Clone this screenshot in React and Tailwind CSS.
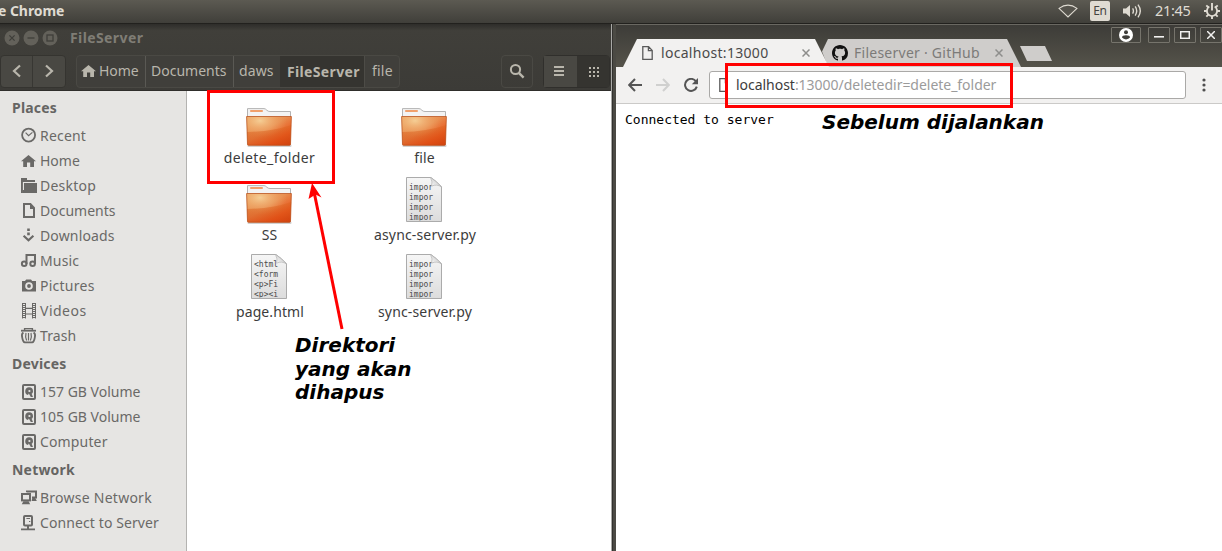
import React from "react";

const UI = "font-['Noto_Sans','Open_Sans',sans-serif]";

const glyphs = {
  recent: (
    <g fill="none" stroke="currentColor">
      <circle cx="7.6" cy="7.1" r="6.5" strokeWidth="1.8" />
      <path d="M4.6 4.6 L7.6 7.6 L11.4 4.4" strokeWidth="1.2" />
    </g>
  ),
  home: <path fill="currentColor" d="M7.5 2 L15 8.2 H13 V14 H9.2 V9.6 H6 V14 H2.2 V8.2 H0 Z" />,
  desktop: (
    <g fill="currentColor">
      <path d="M0 0 H6 V2 H14 V4 H1.9 V15 H0 Z" />
      <path d="M3 5 H16 V15 H3 Z" />
      <path d="M1.5 12 V15 H4 V12 Z" />
    </g>
  ),
  documents: (
    <g>
      <path fill="none" stroke="currentColor" strokeWidth="2" d="M3 1 H9.4 L13 4.8 V14 H3 Z" />
      <path fill="currentColor" d="M9 1 V6 H13.5 Z" />
    </g>
  ),
  downloads: (
    <g>
      <path fill="currentColor" d="M6.2 .6 H8.8 V3 H6.2 Z M6.2 4.4 H8.8 V7.2 H6.2 Z" />
      <path fill="none" stroke="currentColor" strokeWidth="2.2" d="M2.6 7.8 L7.5 12.2 L12.4 7.8" />
    </g>
  ),
  music: (
    <g fill="none" stroke="currentColor" strokeWidth="2">
      <circle cx="3.2" cy="10.8" r="2.3" />
      <circle cx="11.6" cy="10.8" r="2.3" />
      <path d="M5.5 11 V2 H14 V11" />
    </g>
  ),
  pictures: (
    <path
      fill="currentColor"
      fillRule="evenodd"
      d="M1 3 H4 L5.2 1.4 H10 L11.2 3 H15 V13.4 H1 Z M8 4.2 A3.8 3.8 0 1 0 8 11.8 A3.8 3.8 0 1 0 8 4.2 Z M8 6.1 A1.9 1.9 0 1 1 8 9.9 A1.9 1.9 0 1 1 8 6.1 Z"
    />
  ),
  videos: (
    <g fill="none" stroke="currentColor">
      <path strokeWidth="1" d="M1.5 0 V15.5 M4.5 0 V15.5 M11.5 0 V15.5 M14.5 0 V15.5" />
      <path strokeWidth="3" strokeDasharray="1 1" d="M3 0 V16 M13 0 V16" />
      <path strokeWidth="1.2" d="M4.5 5.4 H11.5 M4.5 11 H11.5" />
    </g>
  ),
  trash: (
    <g fill="none" stroke="currentColor">
      <path strokeWidth="1.8" d="M0 2.7 H15" />
      <path strokeWidth="1.4" d="M3.6 2.2 V.6 H11.4 V2.2" />
      <path strokeWidth="1.8" d="M2.4 4.6 Q.2 6 1.2 9.5 Q2 14.2 3.8 14.4 H11.2 Q13 14.2 13.8 9.5 Q14.8 6 12.6 4.6" />
      <path strokeWidth="1.2" d="M5 5 Q4 9 5.6 12.6 M7.5 5 V12.6 M10 5 Q11 9 9.4 12.6" />
    </g>
  ),
  disk: (
    <g>
      <rect x="2" y="1" width="12" height="14" rx="1" fill="none" stroke="currentColor" strokeWidth="2" />
      <path fill="currentColor" d="M8 3.2 A4 4 0 0 1 12 7.2 C12 8.6 11.4 9.2 10.6 9.8 L12 13 H9.8 L7.8 9.4 L7 11 A4 4 0 0 1 8 3.2 Z" />
      <circle cx="8.4" cy="7" r="1.1" fill="#e6e5e3" />
    </g>
  ),
  network: (
    <g>
      <rect x="1" y="4" width="8" height="6.4" fill="none" stroke="currentColor" strokeWidth="2" />
      <path fill="currentColor" d="M2.4 11.2 H7.6 L9.2 14.2 H.8 Z" />
      <path fill="none" stroke="currentColor" strokeWidth="2" d="M6 2.2 V1.4 H15 V7.6 H11" />
      <path fill="currentColor" d="M11.4 7.6 H14 L15.8 11 H10.6 Z" />
    </g>
  ),
  server: (
    <g>
      <rect x="3" y="1" width="8" height="9.6" rx="1" fill="none" stroke="currentColor" strokeWidth="2" />
      <path fill="none" stroke="currentColor" d="M5.4 3.5 H9" />
      <path fill="currentColor" d="M6 11 H8 V13.4 H14 V15.2 H0 V13.4 H6 Z M8 6 H9.3 V7 H8 Z" />
    </g>
  ),
};

function Glyph({ name, className = "" }) {
  return (
    <svg viewBox="0 0 16 16" className={`size-4 shrink-0 overflow-visible ${className}`}>
      {glyphs[name]}
    </svg>
  );
}

const sections = [
  {
    title: "Places",
    items: [
      ["recent", "Recent", "tracking-[0.2px]"],
      ["home", "Home"],
      ["desktop", "Desktop", "tracking-[0.25px]"],
      ["documents", "Documents"],
      ["downloads", "Downloads", "tracking-[0.15px]"],
      ["music", "Music", "tracking-[0.15px]"],
      ["pictures", "Pictures", "tracking-[0.25px]"],
      ["videos", "Videos", "tracking-[0.5px]"],
      ["trash", "Trash", "tracking-[0.1px]"],
    ],
  },
  {
    title: "Devices",
    items: [
      ["disk", "157 GB Volume"],
      ["disk", "105 GB Volume"],
      ["disk", "Computer", "tracking-[0.15px]"],
    ],
  },
  {
    title: "Network",
    items: [
      ["network", "Browse Network", "tracking-[0.25px]"],
      ["server", "Connect to Server", "tracking-[0.1px]"],
    ],
  },
];

function FolderIcon() {
  return (
    <svg viewBox="0 0 48 48" className="size-12">
      <defs>
        <linearGradient id="folderFront" x1="0" y1="0" x2="1" y2="1">
          <stop offset="0" stopColor="#eba35f" />
          <stop offset=".45" stopColor="#e88e50" />
          <stop offset=".75" stopColor="#e9581f" />
          <stop offset="1" stopColor="#c9400f" />
        </linearGradient>
        <radialGradient id="folderShine" cx=".3" cy=".15" r=".6">
          <stop offset="0" stopColor="#f6d49c" stopOpacity=".9" />
          <stop offset="1" stopColor="#f0a060" stopOpacity="0" />
        </radialGradient>
        <linearGradient id="folderShade" x1="0" y1="0" x2="0" y2="1">
          <stop offset="0" stopColor="#d9641c" stopOpacity=".35" />
          <stop offset="1" stopColor="#d8430c" stopOpacity=".55" />
        </linearGradient>
      </defs>
      <rect x="1.5" y="44.6" width="44" height="2.4" rx="1" fill="#000" opacity=".18" />
      <path d="M1.5 20 V8.6 H18 Q19.6 8.7 20.8 10.2 Q22 11.5 24 11.5 H44.5 V20 Z" fill="#f3f3f3" stroke="#b3b3b3" />
      <rect x="4" y="10" width="13" height="2" rx=".9" fill="#f0a06c" />
      <path d="M.6 16.5 H45.4 L44.5 44.5 Q44.4 45.4 43.4 45.4 H2.6 Q1.6 45.4 1.5 44.5 Z" fill="url(#folderFront)" />
      <path d="M.6 16.5 H45.4 L44.5 44.5 H1.5 Z" fill="url(#folderShine)" />
      <path d="M1 32 Q26 31.5 45.2 25 L44.5 45 H1.6 Z" fill="url(#folderShade)" />
      <path d="M.6 16.5 H45.4 L44.5 44.5 Q44.4 45.2 43.4 45.2 H2.6 Q1.6 45.2 1.5 44.5 Z" fill="none" stroke="#b8501c" strokeOpacity=".75" />
    </svg>
  );
}

function TextFileIcon({ lines }) {
  return (
    <svg viewBox="0 0 48 48" className="size-12">
      <defs>
        <linearGradient id="paper" x1="0" y1="0" x2="0" y2="1">
          <stop offset="0" stopColor="#f6f6f6" />
          <stop offset="1" stopColor="#dcdcdc" />
        </linearGradient>
        <linearGradient id="curl" x1="0" y1="1" x2="1" y2="0">
          <stop offset="0" stopColor="#fff" />
          <stop offset="1" stopColor="#b9b9b9" />
        </linearGradient>
        <clipPath id="paperClip">
          <rect x="6" y="1" width="34" height="42.4" />
        </clipPath>
      </defs>
      <path d="M5.5 .5 H30 Q35 4 40.5 9.6 V44.5 H5.5 Z" fill="url(#paper)" stroke="#ababab" />
      <g clipPath="url(#paperClip)" fill="#4b4b4b" className="font-['DejaVu_Sans_Mono',monospace] text-[8px]">
        {lines.map((line, i) => (
          <text key={i} x="8" y={13 + i * 10}>{line}</text>
        ))}
      </g>
      <path d="M29.5 .5 Q32 5 30.5 9.2 Q36 6.6 40.5 10.1 Q35.5 4.2 29.5 .5 Z" fill="url(#curl)" stroke="#b5b5b5" strokeWidth=".7" />
    </svg>
  );
}

const py = ["impor", "impor", "impor", "impor"];
const html = ["<html", "<form", "<p>Fi", "<p><i"];

const files = [
  { name: "delete_folder", tracking: "tracking-[0.4px]" },
  { name: "file", tracking: "tracking-[0.2px]" },
  { name: "SS" },
  { name: "async-server.py", lines: py, tracking: "tracking-[0.15px] pl-px" },
  { name: "page.html", lines: html, tracking: "tracking-[0.1px] pl-px" },
  { name: "sync-server.py", lines: py, tracking: "tracking-[0.15px] pl-px" },
];

function SystemBar() {
  return (
    <header className="flex h-6 shrink-0 items-center justify-between border-b border-[#22211e] bg-linear-to-b from-[#5c5a52] to-[#403f3a] text-[#dfdbd2]">
      <span className="-ml-[2px] pb-[2px] text-[14px] font-bold tracking-[-0.05px]">e Chrome</span>
      <div className="flex h-full items-center pb-px">
        <svg viewBox="0 0 20 14" className="mr-[12px] h-3.5 w-5" fill="none" stroke="currentColor" strokeWidth="1.1">
          <path d="M1 4.4 Q10 -2.2 19 4.4 L10 13 Z" fill="#55534c" />
        </svg>
        <span className="mr-[13px] flex h-5 w-5 items-center justify-center rounded-[2px] bg-[#dfdbd2] text-[12px] tracking-[-0.3px] text-[#45443f]">En</span>
        <svg viewBox="0 0 20 16" className="mr-[12px] h-4 w-5" fill="none" stroke="currentColor" strokeWidth="1.4">
          <path d="M0 5.5 H3 L7 2 V14 L3 10.5 H0 Z" fill="currentColor" stroke="none" />
          <path d="M9.6 5.4 Q11.3 8 9.6 10.6 M12.2 3.4 Q15.2 8 12.2 12.6 M15 1.6 Q19.6 8 15 14.4" />
        </svg>
        <span className="mr-[13px] w-[36px] text-[14.5px] tracking-[-0.3px]">21:45</span>
        <svg viewBox="0 0 16 16" className="mr-[2px] size-4" fill="none" stroke="currentColor">
          <path strokeWidth="1.8" d="M5.3 3.6 A5.1 5.1 0 1 0 10.7 3.6" />
          <path strokeWidth="1.9" d="M8 0 V7.6 M0 8 H3 M13 8 H16 M8 13 V16 M2.3 2.3 L4.4 4.4 M13.7 2.3 L11.6 4.4 M2.3 13.7 L4.4 11.6 M13.7 13.7 L11.6 11.6" />
        </svg>
      </div>
    </header>
  );
}

function WindowDot({ children }) {
  return (
    <svg viewBox="0 0 16 16" className="size-4">
      <circle cx="8" cy="8" r="7.5" fill="#63615a" />
      <g fill="none" stroke="#3f3e3a" strokeWidth="1.3">{children}</g>
    </svg>
  );
}

function FilesWindow() {
  return (
    <section className="flex w-[612px] shrink-0 flex-col border-r border-[#a9a9a6] bg-white">
      <div className="flex h-[67px] shrink-0 flex-col border-b border-[#2f2e2b] bg-linear-to-b from-[#2e2d2a] via-[#403f3a] via-10% to-[#3c3b37]">
        <div className="flex h-[27px] items-center gap-[3px] pl-[4px]">
          <WindowDot><path d="M5.4 5.4 L10.6 10.6 M10.6 5.4 L5.4 10.6" /></WindowDot>
          <WindowDot><path d="M4.5 8 H11.5" /></WindowDot>
          <WindowDot><rect x="5" y="5" width="6" height="6" /></WindowDot>
          <h1 className="ml-[9px] text-[14px] font-bold tracking-[0.4px] text-[#7f7d75]">FileServer</h1>
        </div>
        <div className="mt-[4px] flex h-[33px] text-[14px] text-[#b9b6ac]">
          <div className="flex w-[66px] rounded-[4px] border border-[#353430] bg-[#494843]">
            <span className="flex w-8 items-center justify-center border-r border-[#383733] pb-px">
              <svg viewBox="0 0 10 14" className="h-3.5 w-2.5" fill="none" stroke="currentColor" strokeWidth="2.2"><path d="M8 1.5 L2 7 L8 12.5" /></svg>
            </span>
            <span className="flex flex-1 items-center justify-center pb-px">
              <svg viewBox="0 0 10 14" className="h-3.5 w-2.5" fill="none" stroke="currentColor" strokeWidth="2.2"><path d="M2 1.5 L8 7 L2 12.5" /></svg>
            </span>
          </div>
          <nav className="ml-[10px] flex w-[324px] rounded-[4px] border border-[#4a4944] bg-[#403f3b]">
            <span className="flex w-[69px] items-center border-r border-[#5a5954] pb-[2px] pl-1">
              <Glyph name="home" />
              <span className="ml-[2px] tracking-[-0.1px]">Home</span>
            </span>
            <span className="flex w-[88px] items-center border-r border-[#5a5954] pb-[2px] pl-[5px]">Documents</span>
            <span className="flex w-[46px] items-center pb-[2px] pl-[5px] tracking-[0.1px]">daws</span>
            <span className="flex w-[85px] items-center border-r border-[#4d4c47] bg-[#353430] pl-[7px] font-bold tracking-[0.35px]">FileServer</span>
            <span className="flex flex-1 items-center pb-[2px] pl-[7px] tracking-[0.2px]">file</span>
          </nav>
          <div className="ml-[101px] flex w-[32px] items-center justify-center rounded-[4px] border border-[#4a4944] pb-[2px]">
            <svg viewBox="0 0 16 16" className="size-4" fill="none" stroke="currentColor"><circle cx="6.5" cy="6.5" r="4.6" strokeWidth="2" /><path strokeWidth="2.4" d="M9.8 9.8 L14.6 14.6" /></svg>
          </div>
          <div className="ml-[10px] flex w-[67px] rounded-[4px] border border-[#302f2c]">
            <span className="flex w-[33px] items-center justify-center bg-[#494843] pb-[2px] pr-[3px]">
              <svg viewBox="0 0 10 10" className="size-2.5" stroke="currentColor" strokeWidth="2"><path d="M0 1 H10 M0 5 H10 M0 9 H10" /></svg>
            </span>
            <span className="flex flex-1 items-center justify-center bg-[#353430] pl-[2px]">
              <svg viewBox="0 0 10 10" className="size-2.5" stroke="currentColor" strokeWidth="2" strokeDasharray="2 2"><path d="M0 1 H10 M0 5 H10 M0 9 H10" /></svg>
            </span>
          </div>
        </div>
      </div>

      <div className="flex min-h-0 flex-1">
        <aside className="w-[187px] shrink-0 border-r border-[#b4b3b1] bg-[#e6e5e3] pt-px text-[14px] text-[#6a6967]">
          {sections.map((s) => (
            <div key={s.title}>
              <h2 className="flex h-[31px] items-center pl-3 font-bold tracking-[0.2px] text-[#666563]">{s.title}</h2>
              {s.items.map(([icon, label, tracking = ""]) => (
                <div key={label} className="flex h-[25px] items-center pl-[21px]">
                  <Glyph name={icon} />
                  <span className={`ml-[3px] ${tracking}`}>{label}</span>
                </div>
              ))}
            </div>
          ))}
        </aside>
        <main className="grid grow grid-cols-[155px_155px] content-start pl-[5px] pt-[9px] text-[14px] text-[#3c3c3c]">
          {files.map((f) => (
            <div key={f.name} className="flex h-[77px] flex-col items-center">
              {f.lines ? <TextFileIcon lines={f.lines} /> : <FolderIcon />}
              <span className={`leading-[20px] ${f.tracking ?? ""}`}>{f.name}</span>
            </div>
          ))}
        </main>
      </div>
    </section>
  );
}

function PageIcon({ className = "" }) {
  return (
    <svg viewBox="0 0 11 14" className={`h-3.5 w-[11px] ${className}`} fill="none" stroke="#5a5a5a" strokeWidth="1.3">
      <path d="M.8 .7 H6.6 L10.2 4.4 V13.3 H.8 Z M6.4 .8 V4.6 H10" />
    </svg>
  );
}

function CloseX() {
  return (
    <svg viewBox="0 0 8 8" className="size-2" stroke="#8e8e8c" strokeWidth="1.5"><path d="M.5 .5 L7.5 7.5 M7.5 .5 L.5 7.5" /></svg>
  );
}

function FrameButton({ children, className }) {
  return <span className={`flex h-4 items-center justify-center rounded-[1px] border border-[#76746c] ${className}`}>{children}</span>;
}

function BrowserWindow() {
  return (
    <section className="flex min-w-0 flex-1 border-l-[3px] border-[#4b4a44]">
      <div className="flex min-w-0 flex-1 flex-col bg-white">
        <div className="relative flex h-[43px] shrink-0 items-end border-t border-[#6a6862] bg-linear-to-b from-[#3d3c38] to-[#55534a] pl-[7px]">
          <div className="z-10 flex h-7 w-[206px] items-center bg-[#f2f1f0] pl-[19px] [clip-path:polygon(14px_0,192px_0,206px_100%,0_100%)]">
            <PageIcon />
            <span className="ml-[8px] w-[141px] pb-[2px] text-[14px] tracking-[0.3px] text-[#4a4a4a]">localhost:13000</span>
            <CloseX />
          </div>
          <div className="-ml-[11px] flex h-7 w-[203px] items-center bg-[#cfcdcb] pl-[14px] [clip-path:polygon(10px_0,189px_0,203px_100%,10px_100%,4px_45%)]">
            <svg viewBox="0 0 16 16" className="size-4" fill="#111">
              <path d="M8 0C3.58 0 0 3.58 0 8c0 3.54 2.29 6.53 5.47 7.59.4.07.55-.17.55-.38 0-.19-.01-.82-.01-1.49-2.01.37-2.53-.49-2.69-.94-.09-.23-.48-.94-.82-1.13-.28-.15-.68-.52-.01-.53.63-.01 1.08.58 1.23.82.72 1.21 1.87.87 2.33.66.07-.52.28-.87.51-1.07-1.78-.2-3.64-.89-3.64-3.95 0-.87.31-1.59.82-2.15-.08-.2-.36-1.02.08-2.12 0 0 .67-.21 2.2.82.64-.18 1.32-.27 2-.27s1.36.09 2 .27c1.53-1.04 2.2-.82 2.2-.82.44 1.1.16 1.92.08 2.12.51.56.82 1.27.82 2.15 0 3.07-1.87 3.75-3.65 3.95.29.25.54.73.54 1.48 0 1.07-.01 1.93-.01 2.2 0 .21.15.46.55.38A8.01 8.01 0 0016 8c0-4.42-3.58-8-8-8z" />
            </svg>
            <span className="ml-[6px] w-[141px] whitespace-nowrap pb-[2px] text-[14px] tracking-[0.25px] text-[#7c7b79]">Fileserver · GitHub</span>
            <CloseX />
          </div>
          <div className="-ml-px mb-[6px] h-[15px] w-8 bg-[#cfcdcb] [clip-path:polygon(0_0,25px_0,100%_100%,7px_100%)]" />
          <div className="absolute right-0 top-[2px] flex text-[#f2f1f0]">
            <FrameButton className="mr-[7px] w-[30px]">
              <svg viewBox="0 0 14 14" className="size-3.5"><circle cx="7" cy="7" r="7" fill="#fff" /><circle cx="7" cy="4.2" r="2" fill="#3f3e3a" /><path d="M3 9.6 Q3 7.2 7 7.2 Q11 7.2 11 9.6 Q9.6 11.4 7 11.4 Q4.4 11.4 3 9.6 Z" fill="#3f3e3a" /></svg>
            </FrameButton>
            <FrameButton className="mr-[4px] w-[22px]"><svg viewBox="0 0 10 8" className="h-2 w-2.5" stroke="currentColor" strokeWidth="1.6"><path d="M0 5.8 H10" /></svg></FrameButton>
            <FrameButton className="mr-[4px] w-[22px]"><svg viewBox="0 0 10 8" className="h-2 w-2.5" fill="none" stroke="currentColor" strokeWidth="1.5"><rect x=".7" y=".7" width="8.6" height="6.6" /></svg></FrameButton>
            <FrameButton className="w-[22px]"><svg viewBox="0 0 8 8" className="size-2" stroke="currentColor" strokeWidth="1.5"><path d="M0 0 L8 8 M8 0 L0 8" /></svg></FrameButton>
          </div>
        </div>

        <div className="flex h-[37px] shrink-0 items-center border-b border-[#cbcac8] bg-[#f2f1f0] pl-[12px]">
          <svg viewBox="0 0 14 14" className="size-3.5" fill="none" stroke="#555" strokeWidth="2"><path d="M14 7 H1.5 M7 1 L1.2 7 L7 13" /></svg>
          <svg viewBox="0 0 14 14" className="ml-[14px] size-3.5" fill="none" stroke="#d0d0cf" strokeWidth="2"><path d="M0 7 H12.5 M7 1 L12.8 7 L7 13" /></svg>
          <svg viewBox="0 0 14 14" className="ml-[14px] size-3.5" fill="none" stroke="#555" strokeWidth="2"><path d="M11.8 3.2 A6 6 0 1 0 12.8 8.6" /><path d="M14 0 V6.2 H7.8 Z" fill="#555" stroke="none" /></svg>
          <div className="ml-[11px] flex h-7 w-[477px] items-center rounded-[3px] border border-[#aaa9a7] bg-white pl-[9px]">
            <span className="flex w-[11px] items-center"><PageIcon /></span>
            <span className="ml-[6px] whitespace-nowrap pb-[2px] text-[14px] tracking-[-0.03px] text-[#9b9b9b]">
              <span className="text-[#3c3c3c]">localhost</span>:13000/deletedir=delete_folder
            </span>
          </div>
          <svg viewBox="0 0 4 14" className="ml-[16px] h-3.5 w-1" fill="#4f4f4f"><circle cx="2" cy="2" r="1.6" /><circle cx="2" cy="7" r="1.6" /><circle cx="2" cy="12" r="1.6" /></svg>
        </div>
        <pre className="pl-[9px] pt-[8px] font-['DejaVu_Sans_Mono',monospace] text-[13px] leading-[15px] text-black">Connected to server</pre>
      </div>
    </section>
  );
}

const note = "absolute whitespace-nowrap font-['DejaVu_Sans',sans-serif] text-[20px] font-bold italic text-black";

export default function App() {
  return (
    <div className={`relative flex h-[551px] w-[1222px] flex-col overflow-hidden bg-[#33322f] ${UI}`}>
      <SystemBar />
      <div className="flex min-h-0 flex-1">
        <FilesWindow />
        <div className="w-px shrink-0 bg-[#33322f]" />
        <BrowserWindow />
      </div>

      <div className="absolute left-[207px] top-[90px] z-20 h-[94px] w-[128px] border-[3px] border-[#ff0000]" />
      {/* White inset hides the part of the page icon that falls inside the marker. */}
      <div className="absolute left-[725px] top-[63px] z-20 h-[45px] w-[288px] border-[3px] border-[#ff0000]">
        <div className="mt-[7px] h-[22px] w-[6px] bg-white" />
      </div>
      <svg viewBox="0 0 50 150" className="absolute left-[300px] top-[182px] z-20 h-[150px] w-[50px]">
        <path d="M42 147 L14.5 12" stroke="#f00" strokeWidth="3" />
        <path d="M12 1 L21.5 15.5 L15.6 12.6 L8.5 17 Z" fill="#f00" />
      </svg>
      <p className={`${note} left-[295px] top-[334px] leading-[23.5px]`}>
        Direktori<br />yang akan<br />dihapus
      </p>
      <p className={`${note} left-[822px] top-[111px] leading-[23px]`}>Sebelum dijalankan</p>
    </div>
  );
}
